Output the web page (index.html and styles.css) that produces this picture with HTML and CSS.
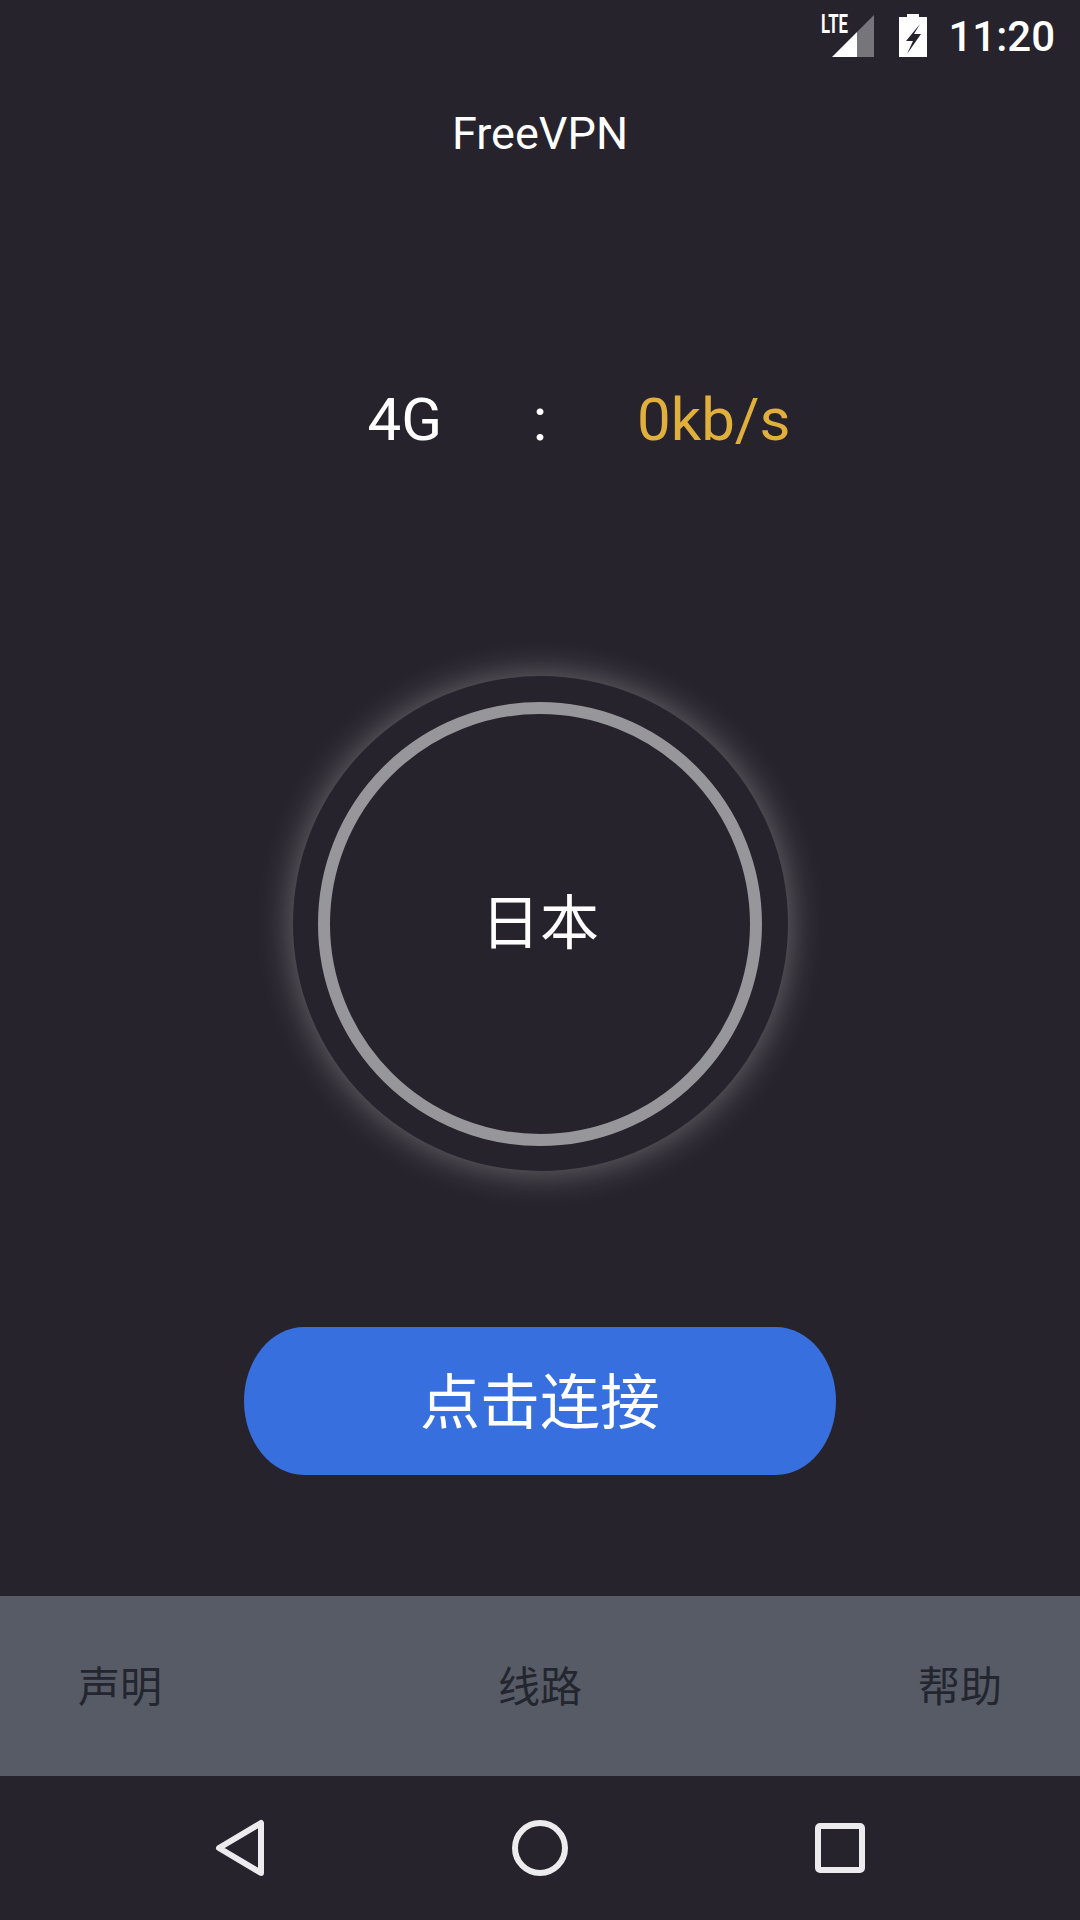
FILE: index.html
```html
<!DOCTYPE html>
<html lang="zh-CN">
<head>
    <meta charset="UTF-8">
    <meta name="viewport" content="width=device-width, initial-scale=1.0">
    <title>FreeVPN</title>
    <link rel="stylesheet" href="styles.css">
</head>
<body>
    <div class="screen">
        <!-- Status bar -->
        <div class="status-bar">
            <svg class="signal" width="56" height="52" viewBox="0 -8 56 52">
                <text x="1" y="18" class="lte" textLength="27" lengthAdjust="spacingAndGlyphs">LTE</text>
                <polygon points="12,42 37,17 37,42" fill="#ffffff"/>
                <polygon points="37,17 54,0 54,42 37,42" fill="#76757b"/>
            </svg>
            <svg class="battery" width="28" height="44" viewBox="0 0 28 44">
                <path d="M8 0h12v3h8v40H0V3h8z" fill="#ffffff"/>
                <path d="M21 10 7 27h7l-6 13 14-20h-7z" fill="#26232c"/>
            </svg>
            <span class="clock">11:20</span>
        </div>

        <div class="app-title">FreeVPN</div>

        <!-- Speed -->
        <div class="speed">
            <span class="speed-type">4G</span>
            <span class="speed-sep">:</span>
            <span class="speed-value">0kb/s</span>
        </div>

        <!-- Country circle -->
        <div class="dial">
            <div class="dial-ring">日本</div>
        </div>

        <div class="connect">点击连接</div>

        <!-- Tabs -->
        <div class="tabs">
            <div class="tab">声明</div>
            <div class="tab">线路</div>
            <div class="tab">帮助</div>
        </div>

        <!-- Android nav -->
        <div class="nav-bar">
            <svg class="nav-back" width="50" height="58" viewBox="0 0 50 58">
                <path d="M46 4v50L4 29z" fill="none" stroke="#ecebee" stroke-width="6" stroke-linejoin="round"/>
            </svg>
            <svg class="nav-home" width="56" height="56" viewBox="0 0 56 56">
                <circle cx="28" cy="28" r="25" fill="none" stroke="#ecebee" stroke-width="6"/>
            </svg>
            <svg class="nav-recent" width="50" height="50" viewBox="0 0 50 50">
                <rect x="3" y="3" width="44" height="44" rx="2" fill="none" stroke="#ecebee" stroke-width="6"/>
            </svg>
        </div>
    </div>
</body>
</html>
```

FILE: styles.css
```css
/* Page */
body {
    margin: 0;
    background-color: #26232c;
    font-family: Roboto, "Noto Sans CJK SC", sans-serif;
}

.screen {
    width: 1080px;
    height: 1920px;
    display: flex;
    flex-direction: column;
    align-items: center;
    overflow: hidden;
    color: #ffffff;
}

/* Status Bar */
.status-bar {
    width: 100%;
    height: 72px;
    box-sizing: border-box;
    padding: 2px 25px 0 0;
    display: flex;
    align-items: center;
    justify-content: flex-end;
}

.signal {
    margin-bottom: 8px;
    margin-right: 23px;
}

.lte {
    font-family: Roboto, sans-serif;
    font-size: 25px;
    font-weight: 700;
    fill: #ffffff;
}

.battery {
    margin-top: -2px;
    margin-right: 21px;
}

.clock {
    font-size: 42px;
    font-weight: 500;
    line-height: 70px;
}

/* Title */
.app-title {
    margin-top: 34px;
    font-size: 45px;
    line-height: 56px;
}

/* Speed Row */
.speed {
    margin-top: 222px;
    width: 100%;
    display: grid;
    grid-template-columns: 1fr 180px 1fr;
    font-size: 60px;
    line-height: 72px;
}

.speed-type {
    justify-self: end;
    margin-right: 8px;
}

.speed-sep {
    text-align: center;
}

.speed-value {
    color: #e1af3c;
    margin-left: 7px;
}

/* Dial */
.dial {
    margin-top: 220px;
    width: 495px;
    height: 495px;
    box-sizing: border-box;
    border-radius: 50%;
    display: flex;
    align-items: center;
    justify-content: center;
    box-shadow: 0 0 36px rgba(255, 255, 255, 0.34);
}

.dial-ring {
    width: 444px;
    height: 444px;
    box-sizing: border-box;
    border: 12px solid #97969b;
    border-radius: 50%;
    padding-bottom: 10px;
    display: flex;
    align-items: center;
    justify-content: center;
    font-size: 59px;
}

/* Connect Button */
.connect {
    margin-top: 156px;
    width: 592px;
    height: 148px;
    box-sizing: border-box;
    padding-bottom: 8px;
    border-radius: 60px / 74px;
    background-color: #386fde;
    display: flex;
    align-items: center;
    justify-content: center;
    font-size: 60px;
}

/* Tabs */
.tabs {
    margin-top: 121px;
    width: 100%;
    height: 180px;
    box-sizing: border-box;
    padding: 0 78px 5px;
    background-color: #565b65;
    display: flex;
    align-items: center;
    justify-content: space-between;
    font-size: 42px;
    color: #23262f;
}

/* Nav Bar */
.nav-bar {
    width: 100%;
    height: 144px;
    display: flex;
    align-items: center;
    justify-content: center;
}

.nav-back {
    margin-right: 247px;
}

.nav-recent {
    margin-left: 247px;
}
```
